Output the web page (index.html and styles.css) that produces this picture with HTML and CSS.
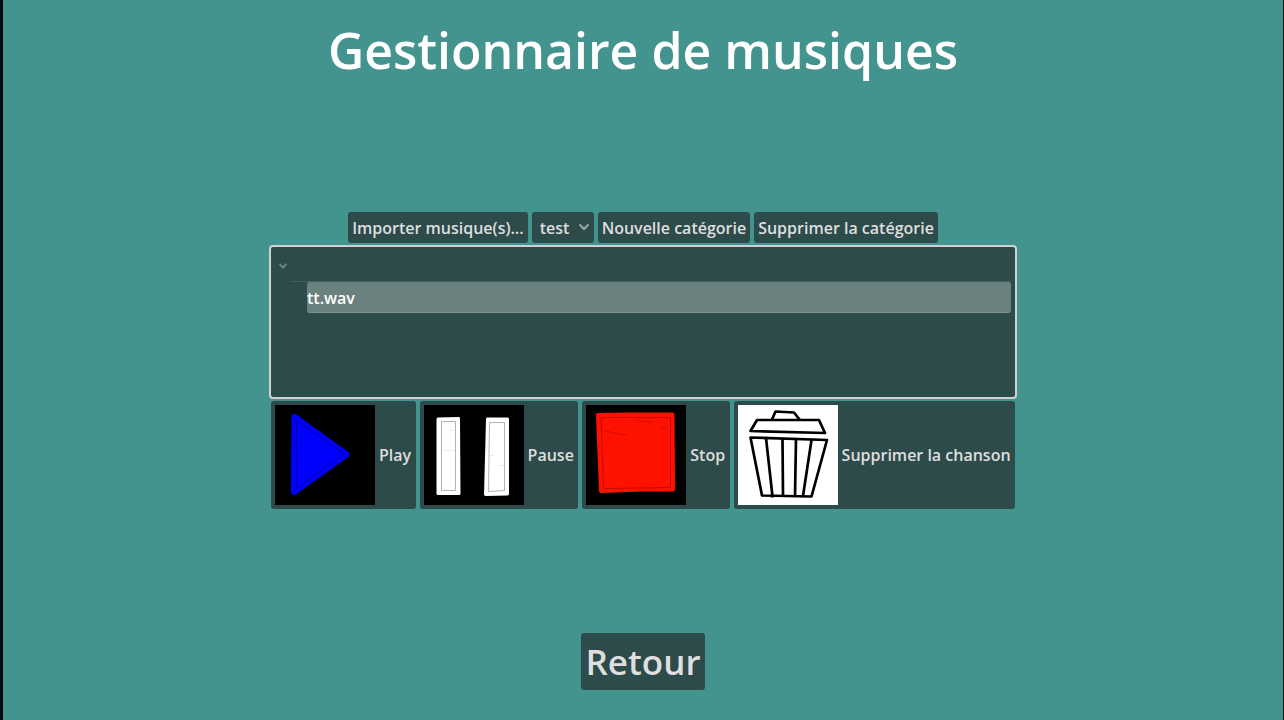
FILE: index.html
```html
<!DOCTYPE html>
<html lang="fr">
<head>
<meta charset="utf-8">
<meta name="viewport" content="width=device-width, initial-scale=1">
<title>Gestionnaire de musiques</title>
<link rel="stylesheet" href="styles.css">
</head>
<body>
<div class="screen">
  <h1 class="title">Gestionnaire de musiques</h1>

  <main class="manager">
    <div class="toolbar">
      <button class="btn" type="button">Importer musique(s)...</button>
      <div class="picker">
        <select class="btn picker-select" aria-label="Catégorie">
          <option>test</option>
        </select>
        <svg class="picker-arrow" viewBox="0 0 12 12" aria-hidden="true"><path d="M1.500 3.500L6 8l4.500-4.500"/></svg>
      </div>
      <button class="btn" type="button">Nouvelle catégorie</button>
      <button class="btn" type="button">Supprimer la catégorie</button>
    </div>

    <div class="tree">
      <button class="tree-toggle" type="button" aria-label="Replier la liste" aria-expanded="true">
        <svg class="tree-arrow" viewBox="0 0 12 12" aria-hidden="true"><path d="M2.500 4L6 7.500 9.500 4"/></svg>
      </button>
      <ul class="tree-list">
        <li><button class="tree-item" type="button">tt.wav</button></li>
      </ul>
    </div>

    <div class="actions">
      <button class="btn action" type="button">
        <svg class="picture" viewBox="0 0 100 100" aria-hidden="true">
          <rect width="100" height="100" fill="#000"/>
          <path d="M19.500 12L71.500 49.500 19 87z" fill="#00f" stroke="#00f" stroke-width="6" stroke-linejoin="round"/>
          <path d="M21.500 15.500L69 49 21.500 83.500z" fill="none" stroke="#000088" stroke-width=".8"/>
        </svg>
        <span class="action-label">Play</span>
      </button>
      <button class="btn action" type="button">
        <svg class="picture" viewBox="0 0 100 100" aria-hidden="true">
          <rect width="100" height="100" fill="#000"/>
          <g fill="#fff" stroke="#fff" stroke-width="3" stroke-linejoin="round">
            <path d="M14 14L34.500 13.500 35 88.500 14 88.500z"/>
            <path d="M63.500 14L83.500 14 83.500 89 61.500 89.500z"/>
          </g>
          <path d="M17.500 16.500H31.500V85.500H17.500zM65.500 17.500H80.500V85.500L64.500 86.500z" fill="none" stroke="#aaa" stroke-width=".9"/>
          <path d="M26 25.500h5M18 45.500h13M66 50.500h4M74 60.500h6" stroke="#ddd" stroke-width=".6"/>
        </svg>
        <span class="action-label">Pause</span>
      </button>
      <button class="btn action" type="button">
        <svg class="picture" viewBox="0 0 100 100" aria-hidden="true">
          <rect width="100" height="100" fill="#000"/>
          <path d="M12 10L41 9.500 86.500 9.500 87 84.500 56 84.500 15 86z" fill="#f10" stroke="#f10" stroke-width="4" stroke-linejoin="round"/>
          <path d="M15 12.500H84.500V82.500L17.500 83.500z" fill="none" stroke="#b80800" stroke-width=".8"/>
          <path d="M19 26l22 4M51 16l16 1M75 23h5" fill="none" stroke="#c00900" stroke-width=".7"/>
        </svg>
        <span class="action-label">Stop</span>
      </button>
      <button class="btn action" type="button">
        <svg class="picture" viewBox="0 0 100 100" aria-hidden="true">
          <rect width="100" height="100" fill="#fff"/>
          <g fill="none" stroke="#000" stroke-width="2.700" stroke-linejoin="round" stroke-linecap="round">
            <path d="M34 14.500L37.500 6.500 56 7.500 61.500 14.500"/>
            <path d="M12.500 26L19 15 81 15 87 28z"/>
            <path d="M12.500 32.500L89 35 73.500 91.500 24 90.500z"/>
            <path d="M28 33L34.500 91.500M44.500 34L45 90.500M58 34L57 91M73.500 35L65 91"/>
          </g>
        </svg>
        <span class="action-label">Supprimer la chanson</span>
      </button>
    </div>
  </main>

  <footer class="footer">
    <button class="btn back" type="button">Retour</button>
  </footer>
</div>
</body>
</html>
```
FILE: styles.css
```css
* {
  box-sizing: border-box;
}

body {
  margin: 0;
  background: #43938f;
  color: #fff;
  font: 600 16px/23px "Open Sans", "Noto Sans", sans-serif;
}

.screen {
  display: grid;
  grid-template-rows: 1fr auto 1fr;
  justify-items: center;
  min-height: 100vh;
  border-left: 3px solid #000910;
  border-right: 1px solid #001012;
}

.title {
  margin: 0;
  padding-top: 16px;
  font-size: 50px;
  font-weight: 600;
  line-height: 68px;
}

.manager {
  display: flex;
  flex-direction: column;
  gap: 4px;
  min-width: 744px;
}

.toolbar,
.actions {
  display: flex;
  justify-content: center;
  gap: 4px;
}

.btn {
  margin: 0;
  padding: 5px 4px 3px;
  border: 0;
  border-radius: 3px;
  background: #2c4b4a;
  color: #dfdfdf;
  font: inherit;
}

.picker {
  position: relative;
  display: flex;
}

.picker-select {
  appearance: none;
  padding: 5px 24px 3px 8px;
}

.picker-arrow {
  position: absolute;
  top: 9px;
  right: 4px;
  width: 12px;
  height: 12px;
  fill: none;
  stroke: #a0adac;
  stroke-width: 2;
  pointer-events: none;
}

.tree {
  min-height: 150px;
  padding: 4px;
  border-radius: 2px;
  outline: 2px solid #cfd1d0;
  background: #2c4b4a;
}

.tree-toggle {
  display: flex;
  align-items: center;
  height: 30px;
  padding: 0 2px;
  border: 0;
  background: none;
}

.tree-arrow {
  width: 12px;
  height: 12px;
  fill: none;
  stroke: #6b8381;
  stroke-width: 2;
}

.tree-list {
  margin: 0 0 0 16px;
  padding: 0 0 0 16px;
  border-top: 1px solid #48625f;
  list-style: none;
}

.tree-item {
  display: block;
  width: 100%;
  height: 31px;
  padding: 3px 0 0;
  border: 0;
  border-bottom: 1px solid #839391;
  border-radius: 3px;
  background: #6b817f;
  color: #fff;
  font: inherit;
  text-align: left;
}

.action {
  display: flex;
  flex: 1 0 auto;
  align-items: center;
  gap: 4px;
  padding: 4px;
}

.action-label {
  padding-top: 2px;
}

.picture {
  width: 100px;
  height: 100px;
}

.footer {
  align-self: end;
  padding-bottom: 30px;
}

.back {
  display: block;
  padding: 4px;
  font-size: 35px;
  line-height: 49px;
}
```
